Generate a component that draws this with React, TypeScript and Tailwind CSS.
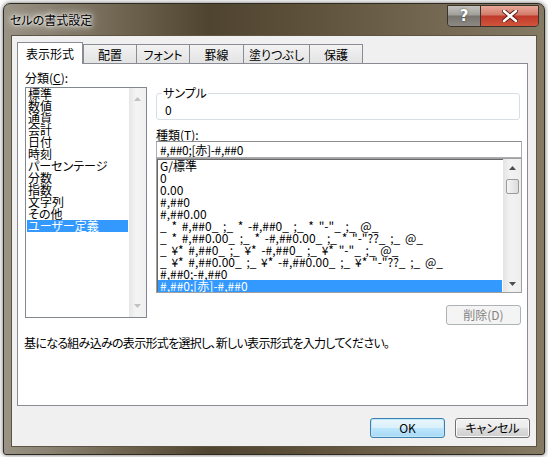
import React from 'react'

const categories = [
  '標準',
  '数値',
  '通貨',
  '会計',
  '日付',
  '時刻',
  'パーセンテージ',
  '分数',
  '指数',
  '文字列',
  'その他',
  'ユーザー定義',
]

const formats = [
  'G/標準',
  '0',
  '0.00',
  '#,##0',
  '#,##0.00',
  '_ * #,##0_ ;_ * -#,##0_ ;_ * "-"_ ;_ @_ ',
  '_ * #,##0.00_ ;_ * -#,##0.00_ ;_ * "-"??_ ;_ @_ ',
  '_ ¥* #,##0_ ;_ ¥* -#,##0_ ;_ ¥* "-"_ ;_ @_ ',
  '_ ¥* #,##0.00_ ;_ ¥* -#,##0.00_ ;_ ¥* "-"??_ ;_ @_ ',
  '#,##0;-#,##0',
  '#,##0;[赤]-#,##0',
]

const tabs = [
  { label: '配置', w: 'w-[54px]' },
  { label: 'フォント', w: 'w-[54px]' },
  { label: '罫線', w: 'w-[55px]' },
  { label: '塗りつぶし', w: 'w-[67px]' },
  { label: '保護', w: 'w-[54px]' },
]

function Arrow({ up, color }: { up?: boolean; color: string }) {
  return (
    <svg width="7" height="4" viewBox="0 0 7 4">
      <polygon points={up ? '0,4 7,4 3.5,0' : '0,0 7,0 3.5,4'} fill={color} />
    </svg>
  )
}

function Button({ children, primary, disabled }: { children: React.ReactNode; primary?: boolean; disabled?: boolean }) {
  let cls = 'border-[#707070] bg-[linear-gradient(#f2f2f2_0%,#ebebeb_50%,#dddddd_50%,#cfcfcf_100%)] shadow-[inset_0_0_0_1px_#fbfbfb] text-black'
  if (primary) cls = 'border-[#3c7fb1] bg-[linear-gradient(#eaf6fd_0%,#d9f0fc_50%,#bee6fd_50%,#a7d9f5_100%)] shadow-[inset_0_0_0_1px_#bfe7f8] text-black'
  if (disabled) cls = 'border-[#adb2b5] bg-[#f4f4f4] text-[#838383]'
  return (
    <div className={`h-[20px] w-[75px] rounded-[3px] border flex items-center justify-center ${cls}`}>
      {children}
    </div>
  )
}

export default function App() {
  return (
    <div className="w-[548px] h-[457px] overflow-hidden bg-white pl-[3px] pt-[3px] font-['Noto_Sans_CJK_JP',sans-serif] text-[12px] leading-[12px] text-black [font-feature-settings:'palt']">
      <div className="w-[542px] h-[452px] rounded-t-[7px] rounded-b-[3px] border border-[#2e2a22] bg-[linear-gradient(90deg,#9a9486_0%,#6f6450_22%,#4f4430_38%,#5c503a_55%,#746852_80%,#857a64_100%)] flex flex-col shadow-[0_0_5px_rgba(0,0,0,0.6)]">
        {/* title bar */}
        <div className="h-[31px] flex items-start shrink-0">
          <span className="ml-[6px] mt-[10px] [text-shadow:0_0_6px_#fff,0_0_10px_#fff,0_0_3px_#fff]">セルの書式設定</span>
          <div className="ml-auto mt-[1px] mr-[5px] flex border border-[#3a352c] rounded-b-[4px] overflow-hidden">
            <div className="w-[33px] h-[20px] flex items-center justify-center bg-[linear-gradient(#c4c2bd_0%,#a19f9a_45%,#77746e_50%,#8d8a84_100%)] border-r border-[#3a352c]">
              <span className="font-['DejaVu_Sans',sans-serif] font-bold text-[15px] leading-[15px] text-white [text-shadow:0_0_2px_#333]">?</span>
            </div>
            <div className="w-[57px] h-[20px] flex items-center justify-center bg-[linear-gradient(#e9a899_0%,#d27a68_45%,#c0392b_50%,#d0553b_100%)]">
              <svg width="16" height="12" viewBox="0 0 16 12">
                <path d="M2 1 L14 11 M14 1 L2 11" stroke="#5a1a10" strokeWidth="4.4" strokeLinecap="round" />
                <path d="M2 1 L14 11 M14 1 L2 11" stroke="#ffffff" strokeWidth="2.6" strokeLinecap="round" />
              </svg>
            </div>
          </div>
        </div>

        {/* client area */}
        <div className="mx-[7px] h-[412px] shrink-0 bg-[#f0f0f0] border border-[#5d5443] flex flex-col">
          {/* tabs */}
          <div className="mt-[6px] h-[21px] pl-[5px] flex items-end">
            <div className="relative z-10 -mb-px h-[22px] w-[66px] bg-white border border-b-0 border-[#898c95] flex items-center justify-center">
              表示形式
            </div>
            {tabs.map((t, i) => (
              <div
                key={t.label}
                className={`h-[19px] ${t.w} ${i > 0 ? '-ml-px' : ''} border border-b-0 border-[#898c95] bg-[linear-gradient(#f2f2f2,#e3e3e3)] flex items-center justify-center pt-[1px]`}
              >
                {t.label}
              </div>
            ))}
          </div>

          {/* panel */}
          <div className="ml-[5px] w-[511px] h-[343px] bg-white border border-[#898c95] flex flex-col">
            <div className="flex">
              {/* left column */}
              <div className="ml-[7px] pt-[8px] flex flex-col">
                <span className="h-[12px]">分類(<span className="underline">C</span>):</span>
                <div className="mt-[3px] w-[122px] h-[231px] border border-[#828790] flex">
                  <div className="flex-1 flex flex-col px-[1px]">
                    {categories.map((c, i) => (
                      <div
                        key={c}
                        className={`h-[12px] pl-[1px] whitespace-nowrap ${i === categories.length - 1 ? 'bg-[#3399ff] text-white' : ''}`}
                      >
                        {c}
                      </div>
                    ))}
                  </div>
                  <div className="w-[17px] bg-[linear-gradient(90deg,#e6e6e6,#f4f4f4_40%,#f0f0f0)] flex flex-col items-center justify-between py-[9px]">
                    <Arrow up color="#c1c1c1" />
                    <Arrow color="#c1c1c1" />
                  </div>
                </div>
              </div>

              {/* right column */}
              <div className="ml-[9px] pt-[23px] flex flex-col">
                <fieldset className="w-[364px] border border-[#d5dfe5] rounded-[3px] pb-[3px]">
                  <legend className="ml-[5px] px-[1px] leading-[12px]">サンプル</legend>
                  <div className="pl-[8px] pt-[5px] h-[17px]">0</div>
                </fieldset>
                <span className="mt-[9px] h-[12px]">種類(<span className="underline">T</span>):</span>
                <div className="w-[366px] h-[17px] border border-[#abadb3] border-t-[#8e8f8f] pl-[3px] flex items-center tracking-[-0.3px]">
                  #,##0;[赤]-#,##0
                </div>
                <div className="w-[366px] h-[135px] border border-[#a0a0a0] shadow-[inset_1px_1px_0_#696969] flex overflow-hidden">
                  <div className="flex-1 min-w-0 flex flex-col pl-[1px] pr-[1px] pt-[1px]">
                    {formats.map((f, i) => (
                      <div
                        key={i}
                        className={`h-[12px] pl-[2px] whitespace-pre [word-spacing:2px] ${i === formats.length - 1 ? 'bg-[#3399ff] text-white' : ''}`}
                      >
                        {f}
                      </div>
                    ))}
                  </div>
                  <div className="w-[18px] shrink-0 bg-[linear-gradient(90deg,#e3e3e3,#f2f2f2_40%,#eeeeee)] flex flex-col items-center">
                    <div className="h-[17px] flex items-center justify-center">
                      <Arrow up color="#4d4d4d" />
                    </div>
                    <div className="mt-[3px] w-[13px] h-[15px] rounded-[2px] border border-[#9a9a9a] bg-[linear-gradient(90deg,#f4f4f4,#e8e8e8_50%,#dcdcdc)]" />
                    <div className="mt-auto h-[17px] flex items-center justify-center">
                      <Arrow color="#4d4d4d" />
                    </div>
                  </div>
                </div>
                <div className="mt-[12px] mr-[1px] self-end">
                  <Button disabled>削除(D)</Button>
                </div>
              </div>
            </div>
            <p className="mt-[12px] ml-[6px] whitespace-nowrap tracking-[-0.7px]">
              基になる組み込みの表示形式を選択し、新しい表示形式を入力してください。
            </p>
          </div>

          {/* buttons */}
          <div className="mt-[12px] mr-[6px] flex justify-end gap-[10px]">
            <Button primary>OK</Button>
            <Button>キャンセル</Button>
          </div>
        </div>
      </div>
    </div>
  )
}
